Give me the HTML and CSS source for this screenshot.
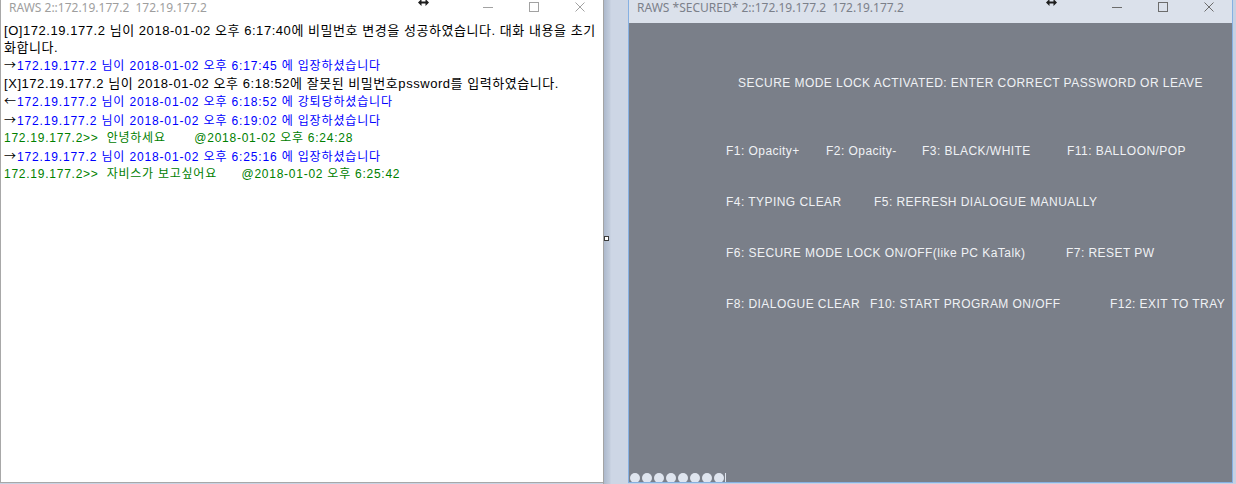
FILE: index.html
```html
<!DOCTYPE html>
<html lang="ko">
<head>
<meta charset="utf-8">
<title>RAWS</title>
<link rel="stylesheet" href="styles.css">
</head>
<body>
<div class="screen">
  <section class="win win-chat">
    <header class="titlebar">
      <span class="title">RAWS 2::172.19.177.2  172.19.177.2</span>
      <div class="controls">
        <span class="btn"><svg viewBox="0 0 10 10"><path d="M0 5.5H10" stroke="currentColor" fill="none"/></svg></span>
        <span class="btn"><svg viewBox="0 0 10 10"><rect x="0.5" y="0.5" width="9" height="9" stroke="currentColor" fill="none"/></svg></span>
        <span class="btn"><svg viewBox="0 0 10 10"><path d="M0.5 0.5L9.5 9.5M9.5 0.5L0.5 9.5" stroke="currentColor" fill="none"/></svg></span>
      </div>
    </header>
    <div class="log">
      <p class="msg sys">[O]172.19.177.2 님이 2018-01-02 오후 6:17:40에 비밀번호 변경을 성공하였습니다. 대화 내용을 초기<br>화합니다.</p>
      <p class="msg"><span class="arr">→</span><span class="in">172.19.177.2 님이 2018-01-02 오후 6:17:45 에 입장하셨습니다</span></p>
      <p class="msg sys">[X]172.19.177.2 님이 2018-01-02 오후 6:18:52에 잘못된 비밀번호pssword를 입력하였습니다.</p>
      <p class="msg"><span class="arr">←</span><span class="in">172.19.177.2 님이 2018-01-02 오후 6:18:52 에 강퇴당하셨습니다</span></p>
      <p class="msg"><span class="arr">→</span><span class="in">172.19.177.2 님이 2018-01-02 오후 6:19:02 에 입장하셨습니다</span></p>
      <p class="msg say">172.19.177.2&gt;&gt;  안녕하세요       @2018-01-02 오후 6:24:28</p>
      <p class="msg"><span class="arr">→</span><span class="in">172.19.177.2 님이 2018-01-02 오후 6:25:16 에 입장하셨습니다</span></p>
      <p class="msg say">172.19.177.2&gt;&gt;  자비스가 보고싶어요      @2018-01-02 오후 6:25:42</p>
    </div>
  </section>

  <div class="gutter"></div>

  <section class="win win-secure">
    <header class="titlebar">
      <span class="title">RAWS *SECURED* 2::172.19.177.2  172.19.177.2</span>
      <div class="controls">
        <span class="btn"><svg viewBox="0 0 10 10"><path d="M0 5.5H10" stroke="currentColor" fill="none"/></svg></span>
        <span class="btn"><svg viewBox="0 0 10 10"><rect x="0.5" y="0.5" width="9" height="9" stroke="currentColor" fill="none"/></svg></span>
        <span class="btn"><svg viewBox="0 0 10 10"><path d="M0.5 0.5L9.5 9.5M9.5 0.5L0.5 9.5" stroke="currentColor" fill="none"/></svg></span>
      </div>
    </header>
    <div class="secure-body">
      <p class="banner">SECURE MODE LOCK ACTIVATED: ENTER CORRECT PASSWORD OR LEAVE</p>
      <div class="keys">
        <div class="keyrow">
          <span class="k100">F1: Opacity+</span>
          <span class="k96">F2: Opacity-</span>
          <span class="k145">F3: BLACK/WHITE</span>
          <span>F11: BALLOON/POP</span>
        </div>
        <div class="keyrow">
          <span class="k148">F4: TYPING CLEAR</span>
          <span>F5: REFRESH DIALOGUE MANUALLY</span>
        </div>
        <div class="keyrow">
          <span class="k340">F6: SECURE MODE LOCK ON/OFF(like PC KaTalk)</span>
          <span>F7: RESET PW</span>
        </div>
        <div class="keyrow">
          <span class="k144">F8: DIALOGUE CLEAR</span>
          <span class="k240">F10: START PROGRAM ON/OFF</span>
          <span>F12: EXIT TO TRAY</span>
        </div>
      </div>
      <div class="pw">
        <span class="dot"></span><span class="dot"></span><span class="dot"></span><span class="dot"></span>
        <span class="dot"></span><span class="dot"></span><span class="dot"></span><span class="dot"></span>
        <span class="caret"></span>
      </div>
    </div>
  </section>

  <div class="edge"></div>

  <span class="handle"></span>
  <svg class="cursor cursor-left" viewBox="0 0 11 7"><path d="M0 3.5L3.5 0V2.5H7.5V0L11 3.5L7.5 7V4.5H3.5V7Z" fill="#1e1e1e"/></svg>
  <svg class="cursor cursor-right" viewBox="0 0 11 7"><path d="M0 3.5L3.5 0V2.5H7.5V0L11 3.5L7.5 7V4.5H3.5V7Z" fill="#1e1e1e"/></svg>
</div>
</body>
</html>
```

FILE: styles.css
```css
* {
  box-sizing: border-box;
  margin: 0;
  padding: 0;
}

html,
body {
  width: 1236px;
  height: 484px;
  overflow: hidden;
}

body {
  background: #c8d2e3;
}

.screen {
  position: relative;
  display: flex;
  width: 1236px;
  height: 483px;
}

.win {
  display: flex;
  flex-direction: column;
}

.win-chat {
  width: 603px;
  background: #ffffff;
  border-left: 1px solid #a8a8a8;
  border-bottom: 1px solid #a8a8a8;
}

.win-secure {
  width: 605px;
  background: #7a7f89;
  border: 1px solid #86b0e2;
  border-top: none;
}

.titlebar {
  display: flex;
  align-items: flex-start;
  flex: none;
}

.win-chat .titlebar {
  height: 22px;
}

.win-secure .titlebar {
  height: 23px;
  background: #dbe1eb;
}

.title {
  font: 12px/15px "Noto Sans", sans-serif;
  white-space: pre;
  padding-left: 8px;
  color: #9e9e9e;
}

.win-secure .title {
  color: #7b808a;
}

.controls {
  margin-left: auto;
  display: flex;
}

.win-chat .controls {
  color: #a2a2a2;
}

.win-secure .controls {
  color: #6c6c6c;
}

.btn {
  width: 46px;
  height: 15px;
  display: flex;
  justify-content: center;
  padding-top: 2px;
}

.btn svg {
  display: block;
  width: 10px;
  height: 10px;
}

.log {
  font: 12px/17px "Liberation Sans", "Noto Sans CJK KR", sans-serif;
  letter-spacing: 0.75px;
  padding-left: 3px;
  color: #000000;
  white-space: nowrap;
}

.msg {
  white-space: pre;
}

.sys {
  font-size: 13px;
  letter-spacing: 0.55px;
}

.arr {
  font-family: "Noto Sans CJK KR", sans-serif;
  color: #000000;
  letter-spacing: 1px;
}

.in {
  color: #0000ff;
  letter-spacing: 0.85px;
}

.say {
  color: #008000;
}

.gutter {
  width: 25px;
  height: 484px;
  border-left: 1px solid #a4a4a4;
  background: linear-gradient(90deg, #adb9cc 0, #c3cddd 6px, #cdd6e5 7px, #cdd6e5 100%);
}

.edge {
  flex: 1;
  background: #c6d1e3;
}

.secure-body {
  flex: 1;
  display: flex;
  flex-direction: column;
  font: 12px/16px "Liberation Sans", Arial, sans-serif;
  letter-spacing: 0.45px;
  color: #f0f2f5;
}

.banner {
  padding: 52px 0 0 109px;
  white-space: nowrap;
}

.keys {
  display: flex;
  flex-direction: column;
  gap: 35px;
  padding: 52px 0 0 97px;
}

.keyrow {
  display: flex;
  white-space: nowrap;
}

.k96 { width: 96px; flex: none; }
.k100 { width: 100px; flex: none; }
.k144 { width: 144px; flex: none; }
.k145 { width: 145px; flex: none; }
.k148 { width: 148px; flex: none; }
.k240 { width: 240px; flex: none; }
.k340 { width: 340px; flex: none; }

.pw {
  margin-top: auto;
  height: 9px;
  overflow: hidden;
  display: flex;
  align-items: flex-start;
  gap: 2px;
  padding-left: 1px;
}

.dot {
  flex: none;
  width: 10px;
  height: 10px;
  border-radius: 50%;
  background: #dfe5ef;
}

.caret {
  flex: none;
  width: 1px;
  height: 9px;
  margin-left: -1px;
  background: #dfe5ef;
}

.handle {
  position: absolute;
  left: 604px;
  top: 236px;
  width: 5px;
  height: 5px;
  background: #ffffff;
  border: 1px solid #3a3a3a;
}

.cursor {
  position: absolute;
  top: -1px;
  width: 11px;
  height: 7px;
}

.cursor-left {
  left: 418px;
}

.cursor-right {
  left: 1046px;
}
```
